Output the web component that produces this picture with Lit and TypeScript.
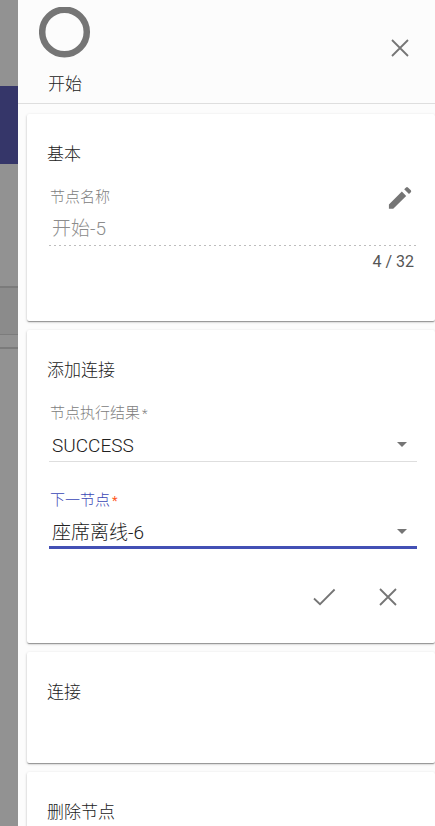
import { LitElement, html, css, svg } from "lit";
import { customElement, state } from "lit/decorators.js";

const closeIcon = svg`<svg viewBox="0 0 28 28" aria-hidden="true"><path d="M6 6L22 22M22 6L6 22" fill="none" stroke="currentColor" stroke-width="1.800"/></svg>`;
const checkIcon = svg`<svg viewBox="0 0 28 28" aria-hidden="true"><path d="M4 15.500L10 21.200L24.600 6.500" fill="none" stroke="currentColor" stroke-width="1.800"/></svg>`;
const pencilIcon = svg`<svg viewBox="0 0 24 24" aria-hidden="true"><path fill="currentColor" d="M2.500 17.600V21.300h3.700L17.300 10.200l-3.700-3.700L2.500 17.600zM21.300 7a1.200 1.200 0 0 0 0-1.600l-2.500-2.500a1.200 1.200 0 0 0-1.600 0l-1.600 1.600 4.100 4.100L21.300 7z"/></svg>`;

@customElement("app-root")
export class AppRoot extends LitElement {
  @state() private name = "开始-5";
  private readonly maxLength = 32;

  static styles = css`
    :host {
      display: grid;
      grid-template-columns: 18px minmax(0, 1fr);
      height: 100vh;
      overflow: hidden;
      background: #fcfcfc;
      color: #212121;
      font-family: Roboto, "Noto Sans CJK SC", sans-serif;
      font-size: 17px;
      line-height: 24px;
    }
    * { box-sizing: border-box; }

    .backdrop { background: #929292; display: flex; flex-direction: column; }
    .bar { height: 78px; margin-top: 86px; background: #353669; }
    .row { height: 49px; margin-top: 122px; background: #8b8b8b; border-top: 2px solid #7b7b7b; border-bottom: 1px solid #7c7c7c; }
    .rule { height: 2px; margin-top: 12px; background: #7b7b7b; }

    .panel { min-width: 0; overflow: hidden; }
    header {
      display: flex;
      justify-content: space-between;
      align-items: center;
      height: 104px;
      padding: 0 21px;
      border-bottom: 1px solid #dedede;
    }
    .kind { display: flex; flex-direction: column; align-items: center; gap: 13px; }
    .kind svg { display: block; width: 52px; height: 52px; }
    .kind h1 { margin: 0; font-size: 17px; font-weight: 300; line-height: 24px; }

    button {
      display: block;
      padding: 0;
      border: 0;
      background: none;
      color: #757575;
      width: 28px;
      height: 28px;
    }
    button svg { display: block; width: 100%; height: 100%; }
    header button { margin-bottom: 8px; }

    .cards { display: flex; flex-direction: column; gap: 9px; padding: 10px 0 9px 9px; }
    .card {
      background: #fff;
      border-radius: 2px;
      padding: 28px 18px 24px 20px;
      box-shadow: 0 1px 3px rgba(0, 0, 0, 0.2), 0 1px 1px rgba(0, 0, 0, 0.2), 0 2px 1px -1px rgba(0, 0, 0, 0.16);
    }
    h2 { margin: 0; font-size: 17px; font-weight: 300; line-height: 24px; }
    .basic { min-height: 207px; }
    .connect { min-height: 313px; }
    .short { min-height: 111px; }

    .field { position: relative; display: grid; margin: 21px 0 0 2px; }
    .field + .field { margin-top: 28px; }
    .field label { padding-left: 1px; font-size: 15px; line-height: 20px; color: #808080; font-weight: 300; }
    .field label.active { color: #3a46b5; }
    .star { margin-left: 2px; font-size: 13px; }
    .active .star { color: #ff5722; font-weight: 400; }
    .field input, .field select {
      width: 100%;
      height: 38px;
      margin: 0;
      padding: 7px 3px 0;
      border: 0;
      border-radius: 0;
      background: none;
      appearance: none;
      outline: none;
      font: 300 19px/28px Roboto, "Noto Sans CJK SC", sans-serif;
      color: #212121;
      opacity: 1;
    }
    .field input:disabled {
      height: 39px;
      padding: 0 3px;
      color: #8c8c8c;
      background: repeating-linear-gradient(to right, #bdbdbd 0 2px, transparent 2px 5px) left bottom / 100% 1px no-repeat;
    }
    .field select { border-bottom: 1px solid #dedede; }
    .field .focused { border-bottom-color: #4350b5; box-shadow: inset 0 -2px #4350b5; }
    .arrow {
      position: absolute;
      right: 10px;
      bottom: 15px;
      border: 5px solid transparent;
      border-top-color: #757575;
      border-bottom: 0;
      pointer-events: none;
    }
    .edit { position: absolute; right: 3px; top: -3px; }
    .count { text-align: right; padding-right: 3px; font-size: 16px; line-height: 32px; color: #555; }
    .actions { display: flex; justify-content: flex-end; gap: 36px; margin: 34px 15px 0 0; }
  `;

  private label(id: string, text: string, active = false) {
    return html`<label for=${id} class=${active ? "active" : ""}>${text}<span class="star">*</span></label>`;
  }

  render() {
    return html`
      <div class="backdrop" aria-hidden="true">
        <div class="bar"></div>
        <div class="row"></div>
        <div class="rule"></div>
      </div>
      <aside class="panel">
        <header>
          <div class="kind">
            <svg viewBox="0 0 52 52" aria-hidden="true"><circle cx="25.500" cy="25" r="22.300" fill="none" stroke="#757575" stroke-width="6.500"/></svg>
            <h1>开始</h1>
          </div>
          <button type="button" aria-label="关闭">${closeIcon}</button>
        </header>
        <main class="cards">
          <section class="card basic">
            <h2>基本</h2>
            <div class="field">
              <label for="name">节点名称</label>
              <input id="name" type="text" disabled .value=${this.name} maxlength=${this.maxLength} />
              <button class="edit" type="button" aria-label="编辑">${pencilIcon}</button>
              <div class="count">${this.name.length} / ${this.maxLength}</div>
            </div>
          </section>
          <section class="card connect">
            <h2>添加连接</h2>
            <div class="field">
              ${this.label("result", "节点执行结果")}
              <select id="result"><option>SUCCESS</option></select>
              <span class="arrow"></span>
            </div>
            <div class="field">
              ${this.label("next", "下一节点", true)}
              <select id="next" class="focused"><option>座席离线-6</option></select>
              <span class="arrow"></span>
            </div>
            <div class="actions">
              <button type="button" aria-label="确定">${checkIcon}</button>
              <button type="button" aria-label="取消">${closeIcon}</button>
            </div>
          </section>
          <section class="card short"><h2>连接</h2></section>
          <section class="card short"><h2>删除节点</h2></section>
        </main>
      </aside>
    `;
  }
}
